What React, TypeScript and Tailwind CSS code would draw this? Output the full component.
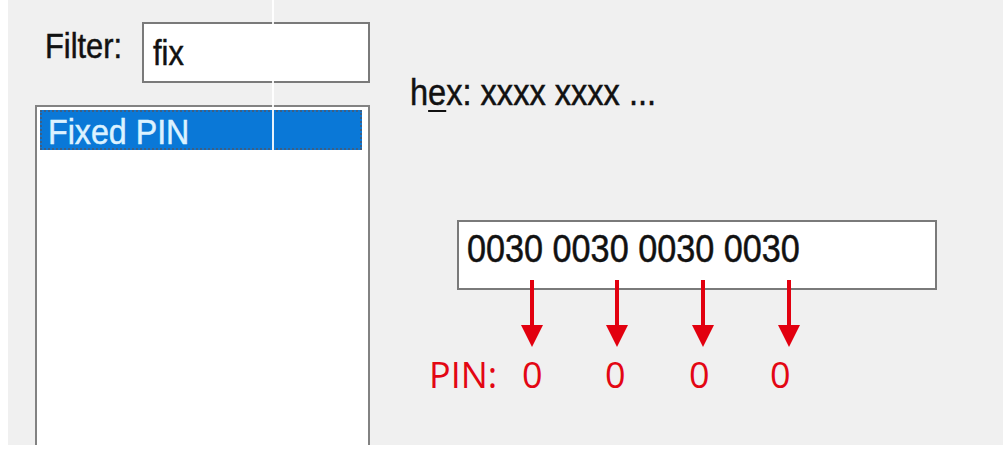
// Windows-style "filter / hex" dialog with a red annotation showing how the hex maps to the PIN.

const ui = "font-['Liberation_Sans',Arial,sans-serif]";
const note = "font-['Open_Sans','Liberation_Sans',sans-serif]";

// The screenshot was stretched vertically, so the dialog text is squeezed on x
// and looks a touch heavier than the plain font.
function Squeezed({ children, className = "" }: { children: React.ReactNode; className?: string }) {
  return (
    <span
      className={`block w-max origin-left whitespace-nowrap leading-none [-webkit-text-stroke:0.5px_currentColor] ${className || "scale-x-[0.88]"}`}
    >
      {children}
    </span>
  );
}

function Arrows() {
  const xs = [75, 160, 246, 332];
  return (
    <svg width="480" height="70" viewBox="0 0 480 70" className="relative block -mt-[10px] ml-[87px]">
      {xs.map((x) => (
        <g key={x} fill="#e2000f">
          <rect x={x - 2} y={0} width={4} height={47} />
          <polygon points={`${x - 11},45 ${x + 11},45 ${x},67`} />
        </g>
      ))}
    </svg>
  );
}

function FilterColumn() {
  return (
    <div className="w-[362px] shrink-0 flex flex-col pl-[27px]">
      <div className="mt-[22px] flex items-start h-[61px]">
        <div className="w-[107px] pl-[10px] pt-[6px] text-[35px] text-[#111]">
          <Squeezed>Filter:</Squeezed>
        </div>
        <div className="w-[229px] h-[61px] border-2 border-[#7a7a7a] bg-white pl-[9px] pt-[11px] text-[35px] text-[#111]">
          <Squeezed>fix</Squeezed>
        </div>
      </div>

      <div className="mt-[22px] w-[335px] flex-1 border-2 border-b-0 border-[#828282] bg-white pt-[3px] px-[3px]">
        <div className="h-[40px] w-[322px] border-2 border-dotted border-[#3d5f85] bg-[#0a78d7] pl-[6px] pt-[2px] text-[35px] text-[#dcf2ff]">
          <Squeezed className="scale-x-[0.92]">Fixed PIN</Squeezed>
        </div>
      </div>
    </div>
  );
}

function HexColumn() {
  const zeros = ["w-[83px]", "w-[84px]", "w-[81px]", "w-[40px]"];
  return (
    <div className="flex flex-col pl-[40px]">
      <div className="mt-[74px] h-[37px] text-[37px] text-[#111]">
        <Squeezed>
          h<span className="underline decoration-2 underline-offset-[5px]">e</span>x: xxxx xxxx ...
        </Squeezed>
      </div>

      <div className="mt-[109px] ml-[47px] w-[480px] h-[70px] border-2 border-[#7a7a7a] bg-white pl-[8px] pt-[8px] text-[38px] text-[#111]">
        <Squeezed className="scale-x-[0.9]">0030 0030 0030 0030</Squeezed>
      </div>

      <div className="-ml-[40px]">
        <Arrows />
      </div>

      <div className={`mt-[7px] ml-[19px] flex text-[36px] leading-none text-[#e30613] ${note}`}>
        <span className="w-[93px]">PIN:</span>
        {zeros.map((w, i) => (
          <span key={i} className={w}>
            0
          </span>
        ))}
      </div>
    </div>
  );
}

export default function App() {
  return (
    <div className={`relative w-[1007px] h-[451px] overflow-hidden bg-white pl-[8px] ${ui}`}>
      <div className="flex w-[995px] h-[445px] bg-[#f0f0f0]">
        <FilterColumn />
        <HexColumn />
      </div>
      {/* thin white seam that runs through the top of the screenshot */}
      <div className="absolute left-[272px] top-0 w-[2px] h-[150px] bg-white/90" />
    </div>
  );
}
